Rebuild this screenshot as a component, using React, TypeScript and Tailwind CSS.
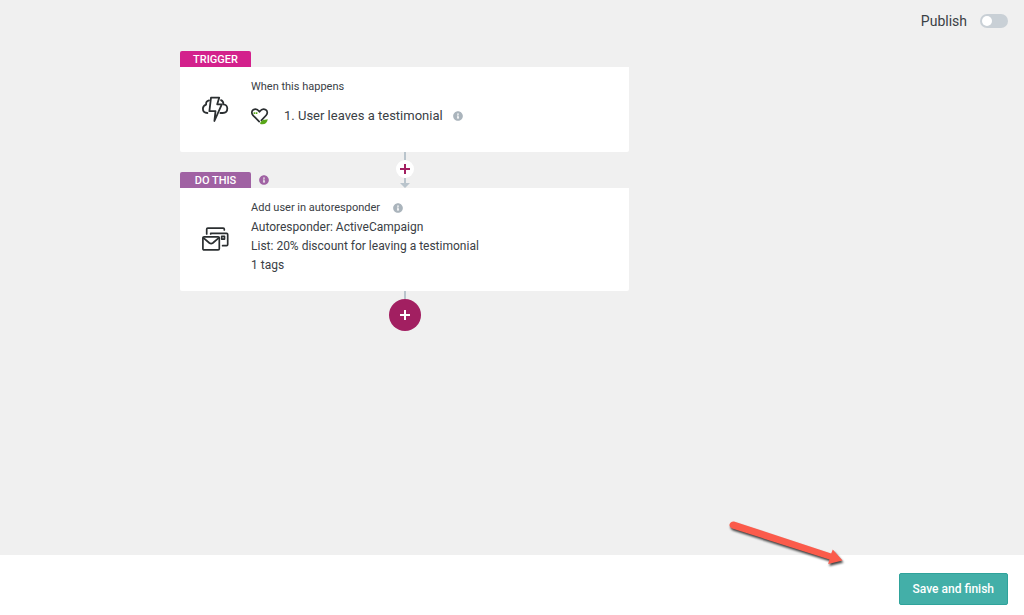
import { useState } from 'react';
import type { ReactNode } from 'react';
import { FaInfoCircle } from 'react-icons/fa';

function ThunderIcon() {
  return (
    <svg width="28" height="28" viewBox="0 0 28 28" fill="none" stroke="#2b2f31" strokeWidth="1.8" strokeLinejoin="round" strokeLinecap="round" aria-hidden="true">
      <path d="M10 2.7H18.2L16.2 9.3H20.8L13.4 26L14.5 16.2H8.4Z" />
      <path d="M8 5.4C5.9 5.9 4.9 7.6 5.1 9.6C3 10.3 1.9 11.9 1.9 13.8C1.9 16.2 3.6 18 6.4 18" />
      <path d="M20 5.2C21.5 5.8 22.5 7.2 22.3 9.3C24.8 9.3 26.3 11.3 26.3 13.6C26.3 16.2 24.5 18 21.8 18H19.4" />
    </svg>
  );
}

function MailIcon() {
  return (
    <svg width="28" height="28" viewBox="0 0 28 28" fill="none" stroke="#2b2f31" strokeWidth="1.7" strokeLinejoin="round" strokeLinecap="round" aria-hidden="true">
      <path d="M5.7 9V4.2Q5.7 3.1 6.8 3.1H22.2Q23.3 3.1 23.3 4.2V5" />
      <path d="M9.7 9V8.3H25.6Q26.7 8.3 26.7 9.4V19.6Q26.7 20.7 25.6 20.7H21.6" />
      <rect x="20.7" y="11.3" width="2.8" height="2.8" />
      <rect x="1.9" y="11.9" width="16.4" height="13" rx="1.2" />
      <path d="M2.4 12.8L8.4 18Q10.1 19.2 11.8 18L17.8 12.8" />
    </svg>
  );
}

function HeartIcon() {
  return (
    <svg width="20" height="20" viewBox="0 0 20 20" fill="none" aria-hidden="true">
      <path d="M8.2 15.6L2 9.3C0.2 7.4 0.6 4.9 2.3 3.8C4.2 2.6 6.6 3.2 8.5 5.8C10.4 3.2 12.8 2.6 14.7 3.8C16.6 5 16.8 7.4 15.2 9.2L10.4 14.4" stroke="#2b2f31" strokeWidth="1.7" strokeLinecap="round" strokeLinejoin="round" />
      <path d="M2.6 6.2H4.3V7.9H2.6ZM4.9 6.2H6.4V7.9H4.9Z" fill="#58a618" />
      <path d="M9.2 18C9 14.8 12.2 13.6 16.8 13.2C16.2 17 13.6 19 9.2 18Z" fill="#58a618" />
    </svg>
  );
}

function PlusIcon() {
  return (
    <svg width="10" height="10" viewBox="0 0 10 10" stroke="currentColor" strokeWidth="2" aria-hidden="true">
      <path d="M5 0V10M0 5H10" />
    </svg>
  );
}

function InfoButton({ label, className }: { label: string; className: string }) {
  return (
    <button type="button" aria-label={label} className={className}>
      <FaInfoCircle size={10} />
    </button>
  );
}

function StepCard({ icon, children }: { icon: ReactNode; children: ReactNode }) {
  return (
    <div className="flex items-center rounded-b-xs bg-white">
      <div className="flex w-[71px] shrink-0 justify-center pr-px pb-0.5">{icon}</div>
      <div className="min-w-0 flex-1">{children}</div>
    </div>
  );
}

// Small hint arrow pointing at the save button
function HintArrow() {
  return (
    <svg width="122" height="50" viewBox="0 0 122 50" className="pointer-events-none absolute right-[175px] bottom-[46px] drop-shadow-[1px_2px_1px_rgba(0,0,0,0.75)]" aria-hidden="true">
      <path d="M7 2.4Q3 2.2 2.4 6Q2.4 8.6 5.2 9.5L102.4 40.5L101.2 45L115.5 41.5L105.8 30.4L104.2 34.4Z" fill="#fb5b4b" />
    </svg>
  );
}

export default function App() {
  const [published, setPublished] = useState(false);

  return (
    <div className="relative flex min-h-screen flex-col bg-[#f0f0f0] font-['Roboto',sans-serif] text-[#3a4045]">
      <header className="flex justify-end px-4 pt-[11px]">
        <label className="flex items-center gap-[13px] text-sm leading-5">
          Publish
          <input
            type="checkbox"
            checked={published}
            onChange={(e) => setPublished(e.target.checked)}
            className="h-3.5 w-7 appearance-none rounded-full bg-[#c9d0d6] p-0.5 before:block before:size-2.5 before:rounded-full before:bg-white checked:bg-[#43afa8] checked:before:ml-3.5"
          />
        </label>
      </header>

      <main className="flex-1 pt-5 pl-[180px]">
        <div className="w-full max-w-[449px]">
          {/* Trigger */}
          <h2 className="w-[71px] rounded-t-xs bg-[#d3218c] pt-px text-center text-[11px] leading-[15px] font-medium text-white">TRIGGER</h2>
          <StepCard icon={<ThunderIcon />}>
            <p className="pt-2.5 text-[11px] leading-5">When this happens</p>
            <div className="flex items-center pt-2 pb-[25px] text-[13px] leading-[22px]">
              <HeartIcon />
              <span className="ml-[13px]">1. User leaves a testimonial</span>
              <InfoButton label="Trigger details" className="ml-2.5 text-[#aab4bc]" />
            </div>
          </StepCard>

          {/* Connector with the next step's tag on its left */}
          <div className="grid grid-cols-[1fr_auto_1fr] items-end">
            <div className="flex items-center gap-2">
              <h2 className="w-[71px] rounded-t-xs bg-[#a062a3] pt-px text-center text-[11px] leading-[15px] font-medium text-white">DO THIS</h2>
              <InfoButton label="About actions" className="text-[#a062a3]" />
            </div>
            <div className="flex h-9 flex-col items-center">
              <div className="h-2 w-0.5 bg-[#b9c4cc]" />
              <button type="button" aria-label="Insert a step" className="flex size-[18px] items-center justify-center rounded-full bg-white text-[#a21f61]">
                <PlusIcon />
              </button>
              <svg width="10" height="10" viewBox="0 0 10 10" fill="#b9c4cc" aria-hidden="true">
                <path d="M4 0H6V5H10L5 10L0 5H4Z" />
              </svg>
            </div>
          </div>

          {/* Action */}
          <StepCard icon={<MailIcon />}>
            <div className="flex items-center gap-[13px] pt-2.5 text-[11px] leading-5">
              Add user in autoresponder
              <InfoButton label="Action details" className="text-[#aab4bc]" />
            </div>
            <div className="pb-4 text-xs leading-[19px]">
              <p>Autoresponder: ActiveCampaign</p>
              <p>List: 20% discount for leaving a testimonial</p>
              <p>1 tags</p>
            </div>
          </StepCard>

          <div className="flex flex-col items-center">
            <div className="h-2 w-0.5 bg-[#b9c4cc]" />
            <button type="button" aria-label="Add a step" className="flex size-8 items-center justify-center rounded-full bg-[#a21f61] text-white">
              <PlusIcon />
            </button>
          </div>
        </div>
      </main>

      <footer className="flex h-15 items-center justify-end bg-white px-4 pt-2">
        <button type="button" className="rounded-xs border border-[#2fa39b] bg-[#43afa8] px-[13px] py-[5px] text-xs leading-5 font-medium text-white">
          Save and finish
        </button>
      </footer>

      <HintArrow />
    </div>
  );
}
